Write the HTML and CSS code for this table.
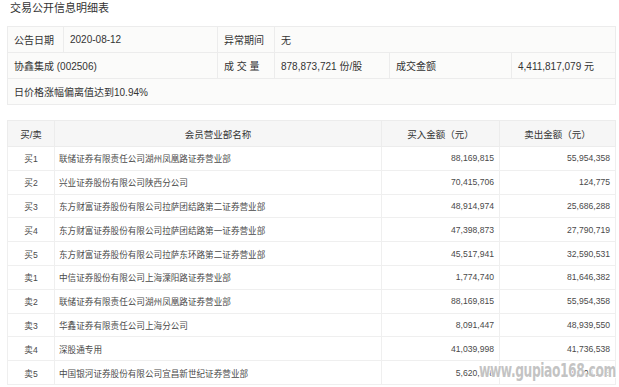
FILE: index.html
```html
<!DOCTYPE html>
<html lang="zh-CN">
<head>
<meta charset="utf-8">
<title>交易公开信息明细表</title>
<link rel="stylesheet" href="styles.css">
</head>
<body>
<div class="page">
  <div class="title">交易公开信息明细表</div>
  <table class="info">
    <colgroup>
      <col class="c1"><col class="c2"><col class="c3"><col class="c4"><col class="c5"><col class="c6">
    </colgroup>
    <tr>
      <td>公告日期</td>
      <td>2020-08-12</td>
      <td>异常期间</td>
      <td colspan="3">无</td>
    </tr>
    <tr>
      <td colspan="2">协鑫集成 (002506)</td>
      <td class="spaced">成 交 量</td>
      <td>878,873,721 份/股</td>
      <td>成交金额</td>
      <td>4,411,817,079 元</td>
    </tr>
    <tr>
      <td colspan="6">日价格涨幅偏离值达到10.94%</td>
    </tr>
  </table>

  <table class="deals">
    <colgroup>
      <col class="d1"><col class="d2"><col class="d3"><col class="d4">
    </colgroup>
    <thead>
      <tr><th>买/卖</th><th>会员营业部名称</th><th>买入金额（元）</th><th>卖出金额（元）</th></tr>
    </thead>
    <tbody>
      <tr><td class="side">买1</td><td class="name">联储证券有限责任公司湖州凤凰路证券营业部</td><td class="num">88,169,815</td><td class="num">55,954,358</td></tr>
      <tr><td class="side">买2</td><td class="name">兴业证券股份有限公司陕西分公司</td><td class="num">70,415,706</td><td class="num">124,775</td></tr>
      <tr><td class="side">买3</td><td class="name">东方财富证券股份有限公司拉萨团结路第二证券营业部</td><td class="num">48,914,974</td><td class="num">25,686,288</td></tr>
      <tr><td class="side">买4</td><td class="name">东方财富证券股份有限公司拉萨团结路第一证券营业部</td><td class="num">47,398,873</td><td class="num">27,790,719</td></tr>
      <tr><td class="side">买5</td><td class="name">东方财富证券股份有限公司拉萨东环路第二证券营业部</td><td class="num">45,517,941</td><td class="num">32,590,531</td></tr>
      <tr><td class="side">卖1</td><td class="name">中信证券股份有限公司上海溧阳路证券营业部</td><td class="num">1,774,740</td><td class="num">81,646,382</td></tr>
      <tr><td class="side">卖2</td><td class="name">联储证券有限责任公司湖州凤凰路证券营业部</td><td class="num">88,169,815</td><td class="num">55,954,358</td></tr>
      <tr><td class="side">卖3</td><td class="name">华鑫证券有限责任公司上海分公司</td><td class="num">8,091,447</td><td class="num">48,939,550</td></tr>
      <tr><td class="side">卖4</td><td class="name">深股通专用</td><td class="num">41,039,998</td><td class="num">41,736,538</td></tr>
      <tr><td class="side">卖5</td><td class="name">中国银河证券股份有限公司宜昌新世纪证券营业部</td><td class="num">5,620,998</td><td class="num">9,206,108</td></tr>
    </tbody>
  </table>
  <div class="watermark">www.gupiao168.com</div>
</div>
</body>
</html>
```

FILE: styles.css
```css
html, body {
  margin: 0;
  padding: 0;
  background: #ffffff;
}
body {
  font-family: "Liberation Sans", "Noto Sans CJK SC", sans-serif;
  color: #333333;
  overflow: hidden;
}
.page {
  position: relative;
  width: 619px;
  height: 387px;
  padding: 0 4px 0 7px;
  box-sizing: border-box;
}
.title {
  font-size: 11px;
  line-height: 17px;
  padding-left: 3px;
  color: #333333;
  height: 26px;
}
table {
  border-collapse: collapse;
  table-layout: fixed;
  width: 608px;
}
.info {
  background: #fbfbfa;
  font-size: 10px;
}
.info td {
  border: 1px solid #ececec;
  height: 25px;
  padding: 0 6px;
  white-space: nowrap;
  color: #333333;
}
.info .c1 { width: 56px; }
.info .c2 { width: 154px; }
.info .c3 { width: 57px; }
.info .c4 { width: 115px; }
.info .c5 { width: 122px; }
.info .c6 { width: 104px; }

.deals {
  margin-top: 15px;
}
.deals .d1 { width: 47px; }
.deals .d2 { width: 327px; }
.deals .d3 { width: 118px; }
.deals .d4 { width: 116px; }
.deals th {
  background: #f6f6f6;
  font-weight: normal;
  font-size: 9.5px;
  height: 25px;
  border: 1px solid #ececec;
  color: #333333;
  text-align: center;
  padding: 0;
}
.deals td {
  border: 1px solid #efefef;
  height: 22.8px;
  font-size: 8.6px;
  color: #4a4a4a;
  white-space: nowrap;
  padding: 0;
}
.deals .side { text-align: center; }
.deals .name { padding-left: 4px; }
.deals .num { text-align: right; padding-right: 5px; }

.watermark {
  position: absolute;
  left: 479px;
  top: 359px;
  width: 190px;
  font-family: "DejaVu Sans Condensed", "DejaVu Sans", sans-serif;
  font-weight: bold;
  font-size: 19px;
  line-height: 22px;
  letter-spacing: -0.6px;
  white-space: nowrap;
  color: rgba(185, 185, 185, 0.85);
  text-shadow: 1px 1px 0 #ffffff, -1px -1px 0 #ffffff;
  transform: scaleX(0.72);
  transform-origin: left top;
}
```
